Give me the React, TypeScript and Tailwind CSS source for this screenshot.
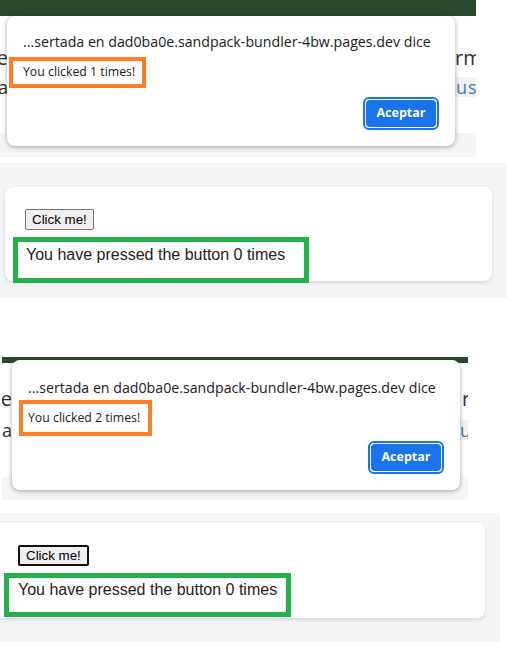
type DialogProps = {
  count: number;
  dialogPos: string;
  titleTop: string;
  boxClass: string;
};

const AlertDialog = ({ count, dialogPos, titleTop, boxClass }: DialogProps) => {
  return (
    <div
      className={`absolute ${dialogPos} w-[448px] h-[130px] bg-white rounded-[8px] shadow-[0_1px_5px_rgba(0,0,0,0.35)] flex flex-col font-['Open_Sans',sans-serif]`}
    >
      <div className={`pl-[16px] ${titleTop} text-[14.2px] leading-[20px] text-[#202124] whitespace-nowrap`}>
        ...sertada en dad0ba0e.sandpack-bundler-4bw.pages.dev dice
      </div>
      {/* orange annotation around the message */}
      <div className={`${boxClass} border-4 border-[#ff7f27] text-[12.3px] leading-[16px] text-[#202124] whitespace-nowrap`}>
        You clicked {count} times!
      </div>
      <div className="absolute left-[356px] top-[81px] w-[76px] h-[33px] rounded-[6px] border-2 border-[#1a73e8] bg-white p-px">
        <div className="w-full h-full rounded-[4px] bg-[#1a73e8] flex items-center justify-center text-white text-[12.5px] font-bold">
          Aceptar
        </div>
      </div>
    </div>
  );
};

type CardProps = {
  outer: string;
  card: string;
  btn: string;
  box: string;
};

const CounterCard = ({ outer, card, btn, box }: CardProps) => {
  return (
    <div className={`${outer} bg-[#f4f5f7] font-['Liberation_Sans',Arial,sans-serif]`}>
      <div className={`${card} bg-white rounded-[8px] shadow-[0_2px_4px_rgba(0,0,0,0.12)]`}>
        <button className={`${btn} h-[21px] px-[6px] bg-[#efefef] rounded-[2px] text-[13.33px] leading-[15px] text-black`}>
          Click me!
        </button>
        {/* green annotation around the text */}
        <div className={`${box} border-[5px] border-[#22b14c] text-[16px] leading-[18px] text-[#222]`}>
          You have pressed the button 0 times
        </div>
      </div>
    </div>
  );
};

export default function App() {
  return (
    <div className="w-[524px] h-[655px] bg-white overflow-hidden">
      {/* Screenshot 1 - first alert */}
      <div className="relative w-[476px] h-[157px] overflow-hidden">
        <div className="h-[16px] bg-[#29492b]" />
        <div className="h-[117px] pt-[30px] font-['Open_Sans',sans-serif] text-[20px] text-[#333]">
          <div className="flex justify-between items-center h-[24px]">
            <div className="w-[8px] flex justify-end overflow-hidden whitespace-nowrap">ge</div>
            <div className="w-[21px] overflow-hidden whitespace-nowrap">rma</div>
          </div>
          <div className="mt-[7px] flex justify-between items-center h-[20px] text-[18px]">
            <div className="w-[8px] flex justify-end overflow-hidden whitespace-nowrap">ca</div>
            <div className="w-[21px] h-[20px] bg-[#f1f3f4] text-[#3b7fae] leading-[20px] pl-px tracking-[1px] whitespace-nowrap">
              us
            </div>
          </div>
        </div>
        <div className="h-[24px] bg-[#f4f5f7]" />
        <AlertDialog
          count={1}
          dialogPos="left-[7px] top-[16px]"
          titleTop="pt-[16px]"
          boxClass="ml-[2px] mt-[5px] w-[137px] h-[31px] pl-[10px] pt-[3px]"
        />
      </div>

      <div className="h-[6px]" />

      {/* Screenshot 1 - page behind */}
      <CounterCard
        outer="w-[507px] h-[135px] pt-[24px] pl-[5px]"
        card="w-[487px] h-[94px] pt-[20px] pl-[8px]"
        btn="ml-[12px] border border-[#767676]"
        box="mt-[6px] w-[296px] h-[46px] pl-[8px] pt-[4px]"
      />

      <div className="h-[59px]" />

      {/* Screenshot 2 - second alert */}
      <div className="relative ml-[2px] w-[466px] h-[143px] overflow-hidden">
        <div className="h-[6px] bg-[#29492b]" />
        <div className="h-[114px] pt-[24px] font-['Open_Sans',sans-serif] text-[20px] text-[#333]">
          <div className="flex justify-between items-center h-[24px]">
            <div className="w-[10px] flex justify-end overflow-hidden whitespace-nowrap">ge</div>
            <div className="w-[6px] overflow-hidden whitespace-nowrap">r</div>
          </div>
          <div className="mt-[9px] flex justify-between items-center h-[20px] text-[18px]">
            <div className="w-[10px] flex justify-end overflow-hidden whitespace-nowrap">ta</div>
            <div className="w-[8px] h-[20px] bg-[#f1f3f4] text-[#3b7fae] leading-[20px] overflow-hidden whitespace-nowrap">
              u
            </div>
          </div>
        </div>
        <div className="h-[23px] bg-[#f4f5f7]" />
        <AlertDialog
          count={2}
          dialogPos="left-[10px] top-[3px]"
          titleTop="pt-[18px]"
          boxClass="ml-[7px] mt-[2px] w-[133px] h-[36px] pl-[5px] pt-[6px]"
        />
      </div>

      <div className="h-[13px]" />

      {/* Screenshot 2 - page behind */}
      <CounterCard
        outer="w-[500px] h-[129px] pt-[10px] pl-0"
        card="ml-[-4px] w-[489px] h-[95px] pt-[20px] pl-[8px]"
        btn="ml-[14px] border-2 border-[#111]"
        box="mt-[6px] w-[287px] h-[44px] pl-[9px] pt-[3px]"
      />
    </div>
  );
}
